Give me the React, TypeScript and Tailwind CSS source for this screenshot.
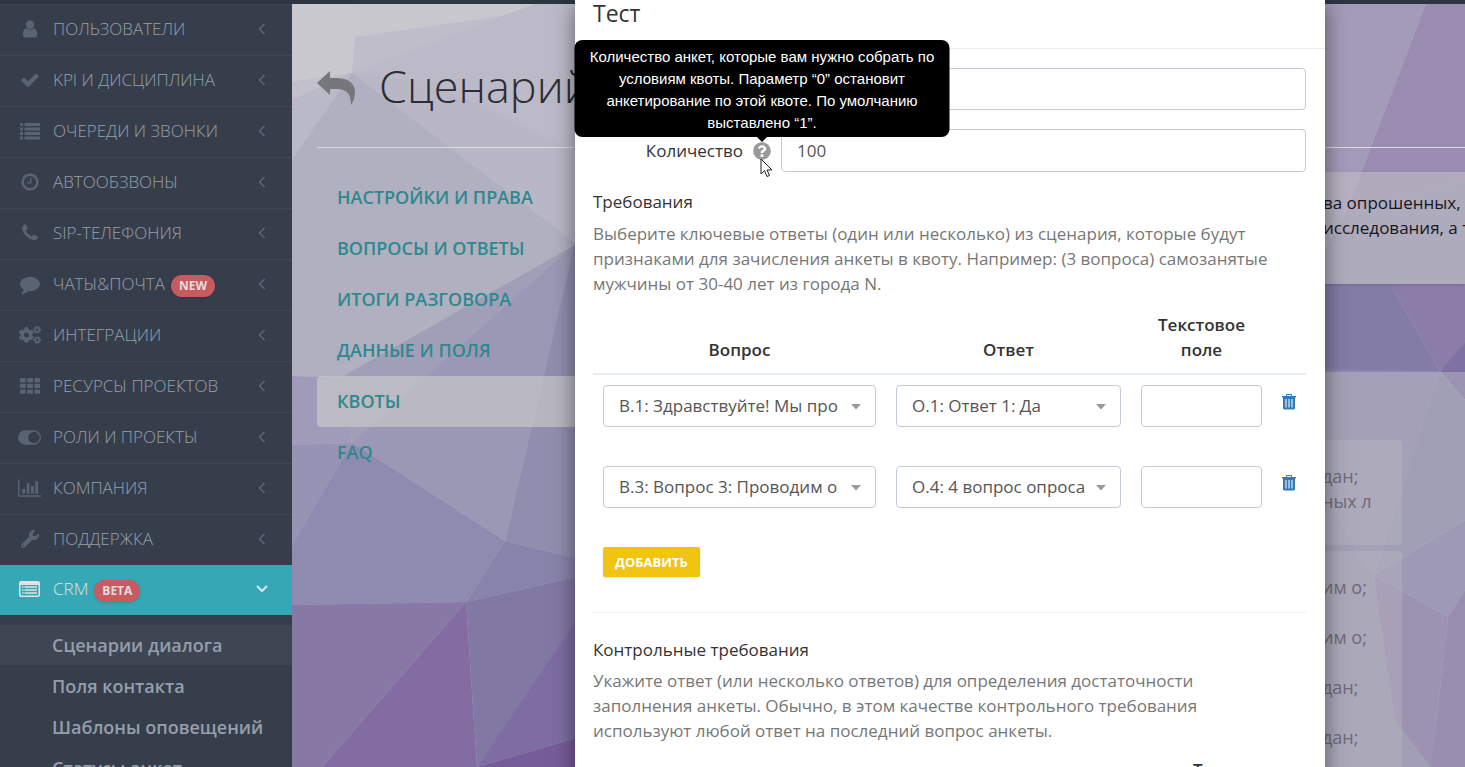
import React from 'react';
import { FaCogs, FaQuestionCircle, FaWrench } from 'react-icons/fa';

interface IconProps {
  className?: string;
}

const UserIcon: React.FC<IconProps> = ({ className }) => (
  <svg viewBox="0 0 1792 1792" fill="currentColor" className={className}>
    <path d="M1536 1399q0 109-62.5 187t-150.5 78h-854q-88 0-150.5-78t-62.5-187q0-85 8.5-160.5t31.5-152 58.5-131 94-89 134.5-34.5q131 128 313 128t313-128q76 0 134.5 34.5t94 89 58.5 131 31.5 152 8.5 160.5zm-256-887q0 159-112.5 271.5t-271.5 112.5-271.5-112.5-112.5-271.5 112.5-271.5 271.5-112.5 271.5 112.5 112.5 271.5z" />
  </svg>
);

const CheckIcon: React.FC<IconProps> = ({ className }) => (
  <svg viewBox="0 0 1792 1792" fill="currentColor" className={className}>
    <path d="M1671 566q0 40-28 68l-724 724-136 136q-28 28-68 28t-68-28l-136-136-362-362q-28-28-28-68t28-68l136-136q28-28 68-28t68 28l294 295 656-657q28-28 68-28t68 28l136 136q28 28 28 68z" />
  </svg>
);

const ListIcon: React.FC<IconProps> = ({ className }) => (
  <svg viewBox="0 0 20 20" fill="currentColor" className={className}>
    {[2, 6.5, 11, 15.5].map((y) => (
      <g key={y}>
        <rect x="0" y={y} width="3" height="3" rx=".6" />
        <rect x="4.5" y={y} width="15.5" height="3" rx=".6" />
      </g>
    ))}
  </svg>
);

const ClockIcon: React.FC<IconProps> = ({ className }) => (
  <svg viewBox="0 0 1792 1792" fill="currentColor" className={className}>
    <path d="M1024 544v448q0 14-9 23t-23 9h-320q-14 0-23-9t-9-23v-64q0-14 9-23t23-9h224v-352q0-14 9-23t23-9h64q14 0 23 9t9 23zm416 352q0-148-73-273t-198-198-273-73-273 73-198 198-73 273 73 273 198 198 273 73 273-73 198-198 73-273zm224 0q0 209-103 385.5t-279.5 279.5-385.5 103-385.5-103-279.5-279.5-103-385.5 103-385.5 279.5-279.5 385.5-103 385.5 103 279.5 279.5 103 385.5z" />
  </svg>
);

const PhoneIcon: React.FC<IconProps> = ({ className }) => (
  <svg viewBox="0 0 1792 1792" fill="currentColor" className={className}>
    <path d="M1600 1240q0 27-10 70.5t-21 68.5q-21 50-122 106-94 51-186 51-27 0-53-3.5t-57.5-12.5-47-14.5-55.5-20.5-49-18q-98-35-175-83-127-79-264-216t-216-264q-48-77-83-175-3-9-18-49t-20.5-55.5-14.5-47-12.5-57.5-3.5-53q0-92 51-186 56-101 106-122 25-11 68.5-21t70.5-10q14 0 21 3 18 6 53 76 11 19 30 54t35 63.5 31 53.5q3 4 17.5 25t21.5 35.5 7 28.5q0 20-28.5 50t-62 55-62 53-28.5 46q0 9 5 22.5t8.5 20.5 14 24 11.5 19q76 137 174 235t235 174q2 1 19 11.5t24 14 20.5 8.5 22.5 5q18 0 46-28.5t53-62 55-62 50-28.5q14 0 28.5 7t35.5 21.5 25 17.5q25 15 53.5 31t63.5 35 54 30q70 35 76 53 3 7 3 21z" />
  </svg>
);

const CommentIcon: React.FC<IconProps> = ({ className }) => (
  <svg viewBox="0 0 1792 1792" fill="currentColor" className={className}>
    <path d="M1792 896q0 174-120 321.5t-326 233-450 85.5q-70 0-145-8-198 175-460 242-49 14-114 22-17 2-30.5-9t-17.5-29v-1q-3-4-.5-12t2-10 4.5-9.5l6-9 7-8.5 8-9q7-8 31-34.5t34.5-38 31-39.5 32.5-51 27-59 26-76q-157-89-247.5-220t-90.5-281q0-130 71-248.5t191-204.5 286-136.5 348-50.5q244 0 450 85.5t326 233 120 321.5z" />
  </svg>
);

const GridIcon: React.FC<IconProps> = ({ className }) => (
  <svg viewBox="0 0 20 20" fill="currentColor" className={className}>
    {[2, 7.7, 13.4].map((y) =>
      [0, 7.2, 14.4].map((x) => (
        <rect key={`${x}-${y}`} x={x} y={y} width="5.8" height="4.4" rx="1" />
      ))
    )}
  </svg>
);

const ToggleIcon: React.FC<IconProps> = ({ className }) => (
  <svg viewBox="0 0 24 24" fill="currentColor" className={className}>
    <path fillRule="evenodd" d="M7.5 4.5h9a7.5 7.5 0 0 1 0 15h-9a7.5 7.5 0 0 1 0-15zM16.5 6a6 6 0 1 0 0 12a6 6 0 1 0 0-12z" />
  </svg>
);

const ChartIcon: React.FC<IconProps> = ({ className }) => (
  <svg viewBox="0 0 24 20" fill="currentColor" className={className}>
    <path d="M0 1h1.5v16.5H24V19H0zM4.5 11h3v5h-3zM9 5h3v11H9zM13.5 8h3v8h-3zM18 3h3v13h-3z" />
  </svg>
);

const ListAltIcon: React.FC<IconProps> = ({ className }) => (
  <svg viewBox="0 0 21 18" fill="currentColor" className={className}>
    <path
      fillRule="evenodd"
      d="M2 1h17a2 2 0 0 1 2 2v12a2 2 0 0 1-2 2H2a2 2 0 0 1-2-2V3a2 2 0 0 1 2-2zM1.5 5v9.5a1 1 0 0 0 1 1h16a1 1 0 0 0 1-1V5z"
    />
    <path d="M3 6.3h1.5v1.5H3zM5.5 6.3H18v1.5H5.5zM3 9.3h1.5v1.5H3zM5.5 9.3H18v1.5H5.5zM3 12.3h1.5v1.5H3zM5.5 12.3H18v1.5H5.5z" />
  </svg>
);

const BackIcon: React.FC<IconProps> = ({ className }) => (
  <svg viewBox="0 0 38 34" fill="currentColor" className={className}>
    <path d="M0 12 13 0v7h8C32 7.500 38 13 38 21c0 6-2 10-4 13 0-10-3-15-13-16h-8v6z" />
  </svg>
);

const TrashIcon: React.FC<IconProps> = ({ className }) => (
  <svg viewBox="0 0 14 16" fill="currentColor" className={className}>
    <path
      fillRule="evenodd"
      d="M4 2V1a1 1 0 0 1 1-1h4a1 1 0 0 1 1 1v1h4v1.5h-1V14a1.5 1.5 0 0 1-1.5 1.5h-9A1.5 1.5 0 0 1 1 14V3.500H0V2zM5 1v1h4V1zM3.5 5v8.5h1V5zM6.5 5v8.5h1V5zM9.5 5v8.5h1V5z"
    />
  </svg>
);

const Chevron: React.FC<{ open?: boolean }> = ({ open }) =>
  open ? (
    <svg viewBox="0 0 12 8" fill="none" stroke="#e2e4e6" strokeWidth="2" className="w-3 h-2">
      <path d="M1 1l5 5 5-5" />
    </svg>
  ) : (
    <svg viewBox="0 0 8 12" fill="none" stroke="#5c6777" strokeWidth="1.5" className="mr-0.5 w-2 h-3">
      <path d="M6.5 1l-5 5 5 5" />
    </svg>
  );

const Badge: React.FC<{ children: React.ReactNode }> = ({ children }) => (
  <span className="ml-[6px] mt-1 flex h-[22px] items-center rounded-full bg-[#c85b61] px-2 text-[12px] font-bold text-[#e6dcdd] shadow">
    {children}
  </span>
);

const menu = [
  { label: 'ПОЛЬЗОВАТЕЛИ', icon: <UserIcon className="size-5" /> },
  { label: 'KPI И ДИСЦИПЛИНА', icon: <CheckIcon className="size-5" /> },
  { label: 'ОЧЕРЕДИ И ЗВОНКИ', icon: <ListIcon className="size-5" /> },
  { label: 'АВТООБЗВОНЫ', icon: <ClockIcon className="size-5" /> },
  { label: 'SIP-ТЕЛЕФОНИЯ', icon: <PhoneIcon className="size-5" /> },
  { label: 'ЧАТЫ&ПОЧТА', icon: <CommentIcon className="size-5" />, badge: 'NEW' },
  { label: 'ИНТЕГРАЦИИ', icon: <FaCogs className="size-[22px]" /> },
  { label: 'РЕСУРСЫ ПРОЕКТОВ', icon: <GridIcon className="size-5" /> },
  { label: 'РОЛИ И ПРОЕКТЫ', icon: <ToggleIcon className="size-[23px]" /> },
  { label: 'КОМПАНИЯ', icon: <ChartIcon className="w-[23px] h-5" /> },
  { label: 'ПОДДЕРЖКА', icon: <FaWrench className="size-[18px]" /> },
];

const submenu = ['Сценарии диалога', 'Поля контакта', 'Шаблоны оповещений', 'Статусы анкет'];

const Sidebar: React.FC = () => (
  <nav className="w-[292px] shrink-0 bg-[#373e4b] text-[#959eab]">
    {menu.map((item) => (
      <a
        key={item.label}
        href="#"
        className="flex h-[51px] items-center border-t border-[#3e4754] pb-[2px] pl-[18px] pr-6 text-[17px]"
      >
        <span className="mr-3 flex w-[23px] justify-center text-[#596372]">{item.icon}</span>
        <span className="font-light">{item.label}</span>
        {item.badge && <Badge>{item.badge}</Badge>}
        <span className="ml-auto">
          <Chevron />
        </span>
      </a>
    ))}
    <a href="#" className="flex h-[50px] items-center bg-[#36a7b4] pb-[2px] pl-[18px] pr-6 text-[17px] text-[#dfe3e6]">
      <span className="mr-3 flex w-[23px] justify-center">
        <ListAltIcon className="w-[21px] h-[18px]" />
      </span>
      <span className="font-light">CRM</span>
      <Badge>BETA</Badge>
      <span className="ml-auto">
        <Chevron open />
      </span>
    </a>
    <ul className="flex flex-col gap-px pt-[10px] text-[18px] font-semibold">
      {submenu.map((label, i) => (
        <li key={label}>
          <a href="#" className={`flex h-10 items-center pl-[52px] ${i === 0 ? 'bg-[#3e4553]' : ''}`}>
            {label}
          </a>
        </li>
      ))}
    </ul>
  </nav>
);

const facets = [
  { points: '292,4 1465,4 1465,767 292,767', fill: '#b9b8c6' },
  { points: '355,37 502,16 530,4 700,4 700,250 575,243 352,73', fill: '#bcbac8' },
  { points: '355,37 502,16 352,73', fill: '#bfbdca' },
  { points: '352,73 430,82 575,150 575,243', fill: '#b9b7c6' },
  { points: '292,4 355,4 355,37 352,73 292,82', fill: '#c9c8cf' },
  { points: '355,4 535,4 502,16 355,37', fill: '#c8c7ce' },
  { points: '292,82 352,73 292,100', fill: '#c1c0cb' },
  { points: '292,100 352,73 292,160', fill: '#bab9c7' },
  { points: '352,73 575,243 575,250 340,378 292,376 292,160', fill: '#b0b0c1' },
  { points: '340,378 575,245 352,443', fill: '#a19fb8' },
  { points: '574,245 352,443 372,457 505,541', fill: '#9b98b5' },
  { points: '574,245 505,541 580,559 580,245', fill: '#908dae' },
  { points: '292,376 340,378 352,443 292,445', fill: '#a09bb8' },
  { points: '292,445 352,443 292,545', fill: '#9693b4' },
  { points: '352,443 505,541 466,602 292,605 292,545', fill: '#8f8bb0' },
  { points: '505,541 580,559 580,576 466,602', fill: '#8883aa' },
  { points: '292,605 466,602 322,767 292,767', fill: '#8878a5' },
  { points: '466,602 322,767 477,767', fill: '#826ca1' },
  { points: '466,602 580,576 580,620 477,767', fill: '#8278a4' },
  { points: '580,615 477,767 580,737', fill: '#7d6da2' },
  { points: '580,737 477,767 580,767', fill: '#765c99' },
  { points: '1300,4 1426,4 1345,215 1300,290', fill: '#a39bb8' },
  { points: '1426,4 1465,4 1465,180 1345,215', fill: '#998cb0' },
  { points: '1345,215 1465,180 1465,290 1300,290', fill: '#948fb2' },
  { points: '1300,284 1390,284 1440,371 1300,371', fill: '#827ca7' },
  { points: '1390,284 1465,284 1465,345 1440,371', fill: '#8b7da8' },
  { points: '1465,343 1440,371 1465,400', fill: '#7f71a1' },
  { points: '1300,369 1440,371 1405,480 1374,575 1300,460', fill: '#8c87ac' },
  { points: '1440,371 1465,400 1465,520 1374,575', fill: '#8884aa' },
  { points: '1465,520 1374,575 1448,617 1465,590', fill: '#827cab' },
  { points: '1300,460 1374,575 1448,767 1300,767', fill: '#8983ab' },
  { points: '1374,575 1448,617 1431,767 1395,720', fill: '#7f70a4' },
  { points: '1448,617 1465,590 1465,767 1431,767', fill: '#7b68a0' },
];

const Backdrop: React.FC = () => (
  <svg viewBox="292 4 1173 763" preserveAspectRatio="xMidYMid slice" className="absolute inset-0 h-full w-full">
    {facets.map((f) => (
      <polygon key={f.points} points={f.points} fill={f.fill} />
    ))}
  </svg>
);

const tabs = ['НАСТРОЙКИ И ПРАВА', 'ВОПРОСЫ И ОТВЕТЫ', 'ИТОГИ РАЗГОВОРА', 'ДАННЫЕ И ПОЛЯ', 'КВОТЫ', 'FAQ'];

const Page: React.FC = () => (
  <main className="relative min-w-0 flex-1 overflow-hidden">
    <Backdrop />
    <div className="relative pl-[25px]">
      <header className="flex h-[144px] items-center gap-6 border-b border-[#dcdbe2] pt-6">
        <a href="#" aria-label="Назад" className="text-[#77767c]">
          <BackIcon className="w-[38px] h-[34px]" />
        </a>
        <h1 className="pb-1 text-[45px] font-light leading-[60px] text-[#2c2d33]">Сценарий</h1>
      </header>
      <div className="flex gap-5 pt-6">
        <ul className="w-[280px] shrink-0 text-[18px] font-semibold text-[#2f888d]">
          {tabs.map((tab) => (
            <li key={tab}>
              <a
                href="#"
                className={`flex h-[51px] items-center rounded pl-5 ${tab === 'КВОТЫ' ? 'bg-[#c8c8c8]/70' : ''}`}
              >
                {tab}
              </a>
            </li>
          ))}
        </ul>
        <div className="min-w-0 flex-1">
          <section className="h-[112px] bg-[#c8c8c8]/50 pt-[18px] shadow">
            <p className="ml-auto w-[142px] whitespace-nowrap text-[17px] leading-[25px] text-[#16161c]">
              ва опрошенных,
              <br />
              исследования, а т
            </p>
          </section>
          <section className="mt-[88px] h-[480px] bg-[#c8c8c8]/40 pr-[63px] pt-[68px] text-[18px] leading-[25px] text-[#6f6b77]">
            <div className="flex h-[105px] justify-end rounded bg-[#c8c8c8]/25 pt-6">
              <p className="w-20 whitespace-nowrap">
                дан;
                <br />
                ных л
              </p>
            </div>
            <div className="mt-[6px] flex justify-end rounded bg-[#c8c8c8]/25 pt-6 pb-10">
              <ul className="flex w-20 flex-col gap-[25px] whitespace-nowrap">
                <li>им о;</li>
                <li>им о;</li>
                <li>дан;</li>
                <li>дан;</li>
              </ul>
            </div>
          </section>
        </div>
      </div>
    </div>
  </main>
);

const Cursor: React.FC = () => (
  <svg viewBox="0 0 13 20" className="absolute left-[7px] top-4 z-20 w-[13px] h-5">
    <path d="M1 1v15l3.5-3.3L7 18.5l2.5-1L7 12h5z" fill="#fff" stroke="#222" strokeWidth="1" />
  </svg>
);

const HelpTooltip: React.FC = () => (
  <span className="relative">
    <FaQuestionCircle className="size-[18px] text-[#999]" />
    <span
      role="tooltip"
      className="absolute bottom-[23px] left-1/2 z-10 w-[375px] -translate-x-1/2 rounded-lg bg-black px-3 pt-[6px] pb-[3px] text-center font-['Liberation_Sans',sans-serif] text-[15px] leading-[22px] text-white"
    >
      Количество анкет, которые вам нужно собрать по условиям квоты. Параметр “0” остановит анкетирование по этой
      квоте. По умолчанию выставлено “1”.
    </span>
    <svg viewBox="0 0 12 6" className="absolute bottom-[18px] left-[3px] w-3 h-[6px]">
      <path d="M0 0h12L6 6z" />
    </svg>
    <Cursor />
  </span>
);

const fieldClass = 'w-full rounded border border-[#c2cad8] bg-white text-[#555]';

const SelectField: React.FC<{ label: string; value: string }> = ({ label, value }) => (
  <div className="relative">
    <select aria-label={label} className={`${fieldClass} h-[42px] appearance-none pb-[2px] pl-[15px] pr-6`}>
      <option>{value}</option>
    </select>
    <svg viewBox="0 0 10 6" className="pointer-events-none absolute right-[15px] top-[19px] w-[10px] h-[6px]">
      <path d="M0 0h10L5 5.5z" fill="#999" />
    </svg>
  </div>
);

const rows = [
  { question: 'В.1: Здравствуйте! Мы про', answer: 'О.1: Ответ 1: Да' },
  { question: 'В.3: Вопрос 3: Проводим о', answer: 'О.4: 4 вопрос опроса' },
];

const QuotaModal: React.FC = () => (
  <div className="absolute inset-0 z-10 flex justify-end overflow-hidden pr-[140px]">
    <div
      role="dialog"
      aria-label="Тест"
      className="h-fit min-h-full w-[750px] bg-white text-[17px] leading-[25px] text-[#333] shadow-[0_5px_20px_rgba(0,0,0,0.5)]"
    >
      <h4 className="flex h-[49px] items-start border-b border-[#ececec] pl-[18px] text-[23px] leading-[26px]">Тест</h4>
      <div className="pl-[18px] pr-[19px] pt-[19px]">
        <div className="flex flex-col gap-[19px]">
          <div className="flex pl-[188px]">
            <input type="text" aria-label="Название" className={`${fieldClass} h-[42px] px-[15px]`} />
          </div>
          <div className="flex items-center">
            <div className="flex w-[188px] shrink-0 items-center justify-end gap-[10px] pr-[10px]">
              <label htmlFor="amount">Количество</label>
              <HelpTooltip />
            </div>
            <input id="amount" type="text" defaultValue="100" className={`${fieldClass} h-[43px] px-[15px]`} />
          </div>
        </div>

        <h5 className="mt-[17px]">Требования</h5>
        <p className="mt-[7px] text-[#777]">
          Выберите ключевые ответы (один или несколько) из сценария, которые будут признаками для зачисления анкеты в
          квоту. Например: (3 вопроса) самозанятые мужчины от 30-40 лет из города N.
        </p>

        <table className="mt-[10px] w-full table-fixed">
          <thead>
            <tr className="border-b-2 border-[#e7ecf1] align-bottom">
              <th className="w-[293px] pb-[11px] font-semibold">Вопрос</th>
              <th className="w-[245px] pb-[11px] font-semibold">Ответ</th>
              <th className="w-[141px] px-[10px] pt-[6px] pb-[11px] font-semibold">Текстовое поле</th>
              <th />
            </tr>
          </thead>
          <tbody>
            {rows.map((row) => (
              <tr key={row.question} className="align-top">
                <td className="px-[10px] pt-[10px] pb-[29px]">
                  <SelectField label="Вопрос" value={row.question} />
                </td>
                <td className="px-[10px] pt-[10px]">
                  <SelectField label="Ответ" value={row.answer} />
                </td>
                <td className="px-[10px] pt-[10px]">
                  <input type="text" aria-label="Текстовое поле" className={`${fieldClass} h-[42px] px-[15px]`} />
                </td>
                <td className="pl-[10px] pt-[19px]">
                  <button type="button" aria-label="Удалить" className="block text-[#337ab7]">
                    <TrashIcon className="w-[14px] h-4" />
                  </button>
                </td>
              </tr>
            ))}
          </tbody>
        </table>

        <button
          type="button"
          className="ml-[10px] mt-[10px] block h-[30px] rounded-xs bg-[#f1c40f] px-3 text-[13px] font-bold leading-[30px] text-white shadow"
        >
          ДОБАВИТЬ
        </button>

        <hr className="mt-[35px] border-[#eee]" />
        <h5 className="mt-6">Контрольные требования</h5>
        <p className="mt-[6px] max-w-[643px] text-[#777]">
          Укажите ответ (или несколько ответов) для определения достаточности заполнения анкеты. Обычно, в этом качестве
          контрольного требования используют любой ответ на последний вопрос анкеты.
        </p>
        <div className="mt-[14px] flex justify-end pr-[26px] font-semibold">Текстовое</div>
      </div>
    </div>
  </div>
);

const App: React.FC = () => (
  <div className="relative flex h-screen flex-col overflow-hidden font-['Open_Sans',sans-serif]">
    <div className="h-1 shrink-0 bg-[#2d3541]" />
    <div className="flex min-h-0 flex-1">
      <Sidebar />
      <Page />
    </div>
    <QuotaModal />
  </div>
);

export default App;
